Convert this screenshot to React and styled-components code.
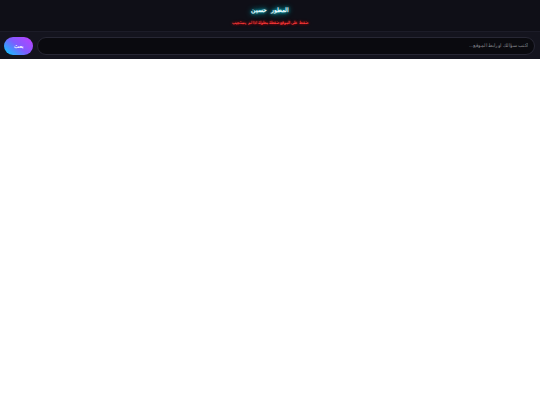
import styled, { createGlobalStyle } from "styled-components";

const GlobalStyle = createGlobalStyle`
  html, body {
    margin: 0;
    padding: 0;
    background: #fff;
    font-family: "Liberation Sans", Arial, sans-serif;
  }
`;

const Header = styled.header`
  height: 27px;
  padding-top: 4px;
  background: #0f0f17;
  text-align: center;
  border-bottom: 1px solid #1c1c28;
`;

const Title = styled.h1`
  margin: 0;
  line-height: 12px;
  font-size: 6.4px;
  font-weight: 700;
  word-spacing: 1.5px;
  color: #e8fbff;
  letter-spacing: 0.3px;
  text-shadow: 0 0 3px #00e5ff, 0 0 6px #00e5ff;
`;

const Warning = styled.p`
  margin: 2px 0 0;
  line-height: 9px;
  font-size: 4.2px;
  font-weight: 700;
  color: #ff3b3b;
  text-shadow: 0 0 3px #ff0000;
`;

const SearchBar = styled.form`
  display: flex;
  flex-direction: row-reverse;
  align-items: center;
  gap: 4px;
  height: 27px;
  padding: 0 5px 0 4px;
  background: #14141e;
`;

const Input = styled.input`
  flex: 1;
  min-width: 0;
  height: 18px;
  box-sizing: border-box;
  padding: 0 6px;
  background: #0a0a0f;
  border: 1px solid #272734;
  border-radius: 10px;
  color: #fff;
  font-family: inherit;
  font-size: 4.6px;
  direction: rtl;
  outline: none;

  &::placeholder {
    color: #85858c;
  }
`;

const SendButton = styled.button`
  width: 29px;
  height: 18px;
  padding: 0;
  border: 0;
  border-radius: 9px;
  background: linear-gradient(40deg, #00d4ff, #7f5cff 50%, #c03dff);
  color: #fff;
  font-family: inherit;
  font-size: 5.3px;
  font-weight: 700;
`;

export default function App() {
  return (
    <>
      <GlobalStyle />
      <Header dir="rtl">
        <Title>المطور حسين</Title>
        <Warning>ضغط على الموقع ضغطة مطولة اذا لم يستجيب</Warning>
      </Header>
      <SearchBar>
        <Input placeholder="اكتب سؤالك أو رابط الموقع..." />
        <SendButton type="button">بحث</SendButton>
      </SearchBar>
    </>
  );
}
